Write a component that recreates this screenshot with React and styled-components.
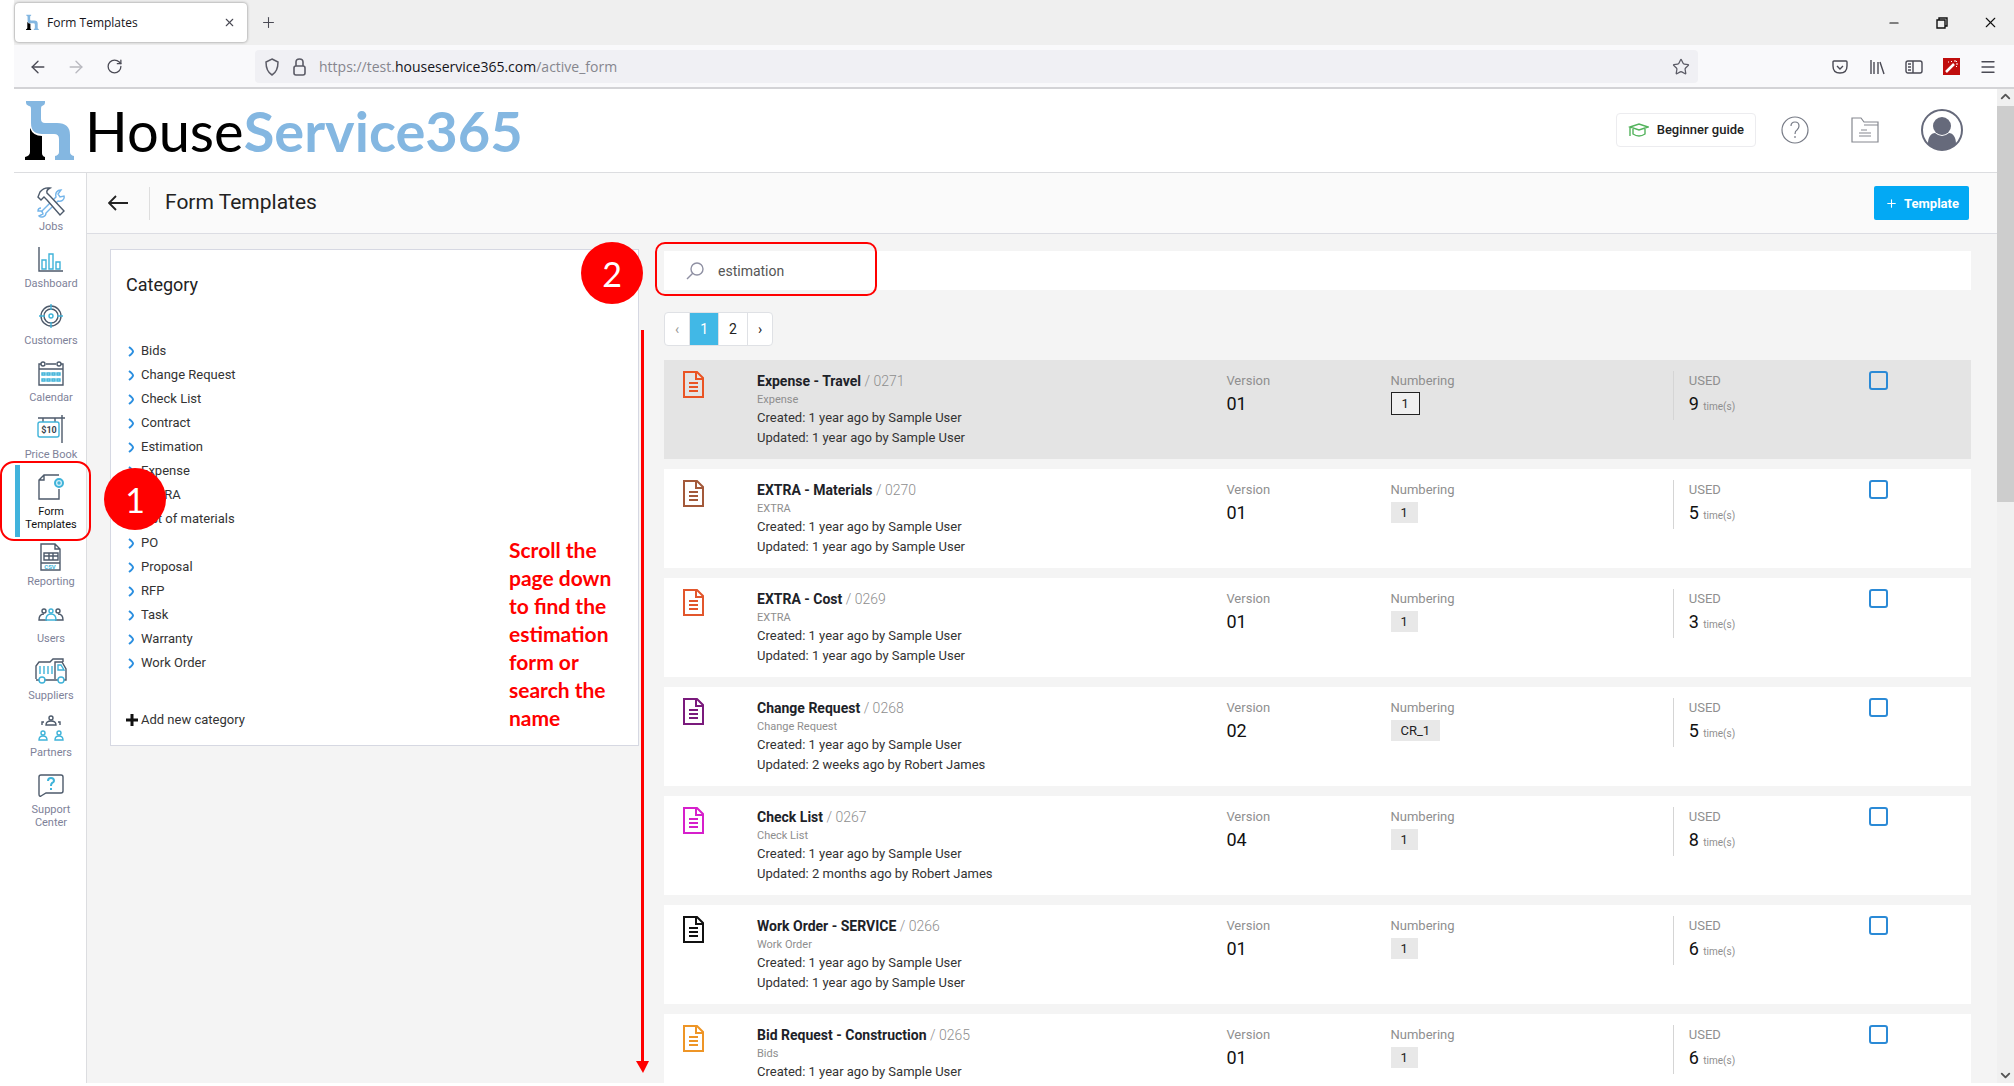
import React from "react";
import styled, { createGlobalStyle, css } from "styled-components";
import {
  ArrowLeft,
  ArrowRight,
  RotateCw,
  X,
  Plus,
  Minus,
  Star,
  Menu,
  ChevronUp,
  ChevronDown,
} from "lucide-react";

const DARK = "#4d5a6b";
const CYAN = "#3fb3d9";

const navItems = [
  { label: "Jobs", icon: "jobs" },
  { label: "Dashboard", icon: "dashboard" },
  { label: "Customers", icon: "customers" },
  { label: "Calendar", icon: "calendar" },
  { label: "Price Book", icon: "price" },
  { label: "Form Templates", icon: "form", active: true },
  { label: "Reporting", icon: "reporting" },
  { label: "Users", icon: "users" },
  { label: "Suppliers", icon: "suppliers" },
  { label: "Partners", icon: "partners" },
  { label: "Support Center", icon: "support" },
];

const categories = [
  "Bids",
  "Change Request",
  "Check List",
  "Contract",
  "Estimation",
  "Expense",
  "EXTRA",
  "List of materials",
  "PO",
  "Proposal",
  "RFP",
  "Task",
  "Warranty",
  "Work Order",
];

const templates = [
  { name: "Expense - Travel", id: "0271", category: "Expense", updated: "1 year ago by Sample User", version: "01", numbering: "1", used: 9, color: "#ea5424", active: true },
  { name: "EXTRA - Materials", id: "0270", category: "EXTRA", updated: "1 year ago by Sample User", version: "01", numbering: "1", used: 5, color: "#a3593a" },
  { name: "EXTRA - Cost", id: "0269", category: "EXTRA", updated: "1 year ago by Sample User", version: "01", numbering: "1", used: 3, color: "#e2562c" },
  { name: "Change Request", id: "0268", category: "Change Request", updated: "2 weeks ago by Robert James", version: "02", numbering: "CR_1", used: 5, color: "#7a1a7c" },
  { name: "Check List", id: "0267", category: "Check List", updated: "2 months ago by Robert James", version: "04", numbering: "1", used: 8, color: "#d61fcb" },
  { name: "Work Order - SERVICE", id: "0266", category: "Work Order", updated: "1 year ago by Sample User", version: "01", numbering: "1", used: 6, color: "#111111" },
  { name: "Bid Request - Construction", id: "0265", category: "Bids", updated: "1 year ago by Sample User", version: "01", numbering: "1", used: 6, color: "#ee9526" },
];

const HMark = ({ width, height }) => (
  <svg width={width} height={height} viewBox="0 0 50 60" aria-hidden="true">
    <path d="M1 0h19v2q0 2-3 3-1 0-1 3v10q0 4 4 4h12q13 0 13 12v17q0 3 4 4v4H30v-4q4-1 4-4V38q0-5-5-5H17Q6 33 6 22V8q0-3-2-3-3-1-3-3z" fill="#84b7e1" />
    <path d="M5 27q3 8 12 8v17q0 3 3 4v3H0v-3q5-1 5-5z" fill="#000" />
  </svg>
);

const NavIcon = ({ name }) => {
  const shapes = {
    jobs: (
      <>
        <g stroke="#74b5ea">
          <path d="M6 26l15-15c-1-4 1-7 5-7l-3 4 2 3 4-1c1 4-3 6-6 5L11 27c0 4-5 5-7 3l4-2-1-3-4 0c0-2 1-3 3-3" />
        </g>
        <path d="M3 11l2-5q4-5 10-4-4 2-3 5l3 3 14 15-4 4L12 14l-3-3-3 3z" fill="#fff" />
      </>
    ),
    dashboard: (
      <>
        <path d="M4 4v24h24" />
        <path d="M7 17h4v9H7zM14 11h4v15h-4zM21 19h4v7h-4z" stroke={CYAN} />
      </>
    ),
    customers: (
      <>
        <circle cx="16" cy="16" r="10" />
        <circle cx="16" cy="16" r="7" />
        <path d="M16 4v6M16 22v6M4 16h6M22 16h6" stroke={CYAN} />
        <circle cx="16" cy="16" r="2" stroke={CYAN} />
      </>
    ),
    calendar: (
      <>
        <path d="M6 7H4v21h24V7h-2M11 7h10M4 12h24" />
        <circle cx="8" cy="7" r="2" />
        <circle cx="24" cy="7" r="2" />
        <path d="M7 16h3v2H7zM12 16h3v2h-3zM17 16h3v2h-3zM22 16h3v2h-3zM7 22h3v2H7zM12 22h3v2h-3zM17 22h3v2h-3zM22 22h3v2h-3z" stroke={CYAN} />
      </>
    ),
    price: (
      <>
        <path d="M3 4h27M27 1v28M8 4v4M20 4v4" />
        <rect x="3" y="8" width="21" height="15" rx="2" stroke={CYAN} />
        <text x="14" y="19" textAnchor="middle" fontSize="9" fontWeight="700" fontFamily="Roboto, sans-serif" fill="#3a4450" stroke="none">$10</text>
      </>
    ),
    form: (
      <>
        <path d="M24 4H9L4 9v19h20V18M9 4v5H4" />
        <circle cx="24" cy="12" r="4" stroke={CYAN} strokeWidth="2" fill="#d5eff8" />
        <circle cx="24" cy="12" r="1" stroke={CYAN} />
      </>
    ),
    reporting: (
      <>
        <path d="M20 3H6v26h19V8zM20 3v5h5M9 12h14v7H9zM9 15h14M14 12v7M18 12v7M6 22h19" />
        <text x="15" y="28" textAnchor="middle" fontSize="6" fontWeight="700" fontFamily="Roboto, sans-serif" fill={CYAN} stroke="none">CSV</text>
      </>
    ),
    users: (
      <>
        <path d="M12 22H4c0-4 1-6 5-6M20 22h8c0-4-1-6-5-6" />
        <circle cx="9" cy="13" r="2" />
        <circle cx="23" cy="13" r="2" />
        <circle cx="16" cy="13" r="2" stroke={CYAN} />
        <path d="M11 22c0-4 2-6 5-6s5 2 5 6z" stroke={CYAN} />
      </>
    ),
    suppliers: (
      <>
        <path d="M1 24V11l3-4h11l3-3h10v3M4 25H1M9 25h14M20 24V7h7l4 7v11h-2" />
        <path d="M5 11v8M9 11v8M13 11v8M17 11v8M23 10h3l3 5h-6z" stroke={CYAN} />
        <circle cx="7" cy="25" r="3" stroke={CYAN} />
        <circle cx="26" cy="25" r="3" stroke={CYAN} />
      </>
    ),
    partners: (
      <>
        <circle cx="16" cy="6" r="2" />
        <path d="M11 13c0-3 2-4 5-4s5 1 5 4zM7 13v-3h2M25 13v-3h-2" />
        <g stroke={CYAN}>
          <circle cx="8" cy="21" r="2" />
          <circle cx="24" cy="21" r="2" />
          <path d="M4 28c0-3 1-4 4-4s4 1 4 4zM20 28c0-3 1-4 4-4s4 1 4 4z" />
        </g>
      </>
    ),
    support: (
      <>
        <path d="M6 6h20q2 0 2 2v14q0 2-2 2H11l-5 3q-2 1-2-2V8q0-2 2-2z" />
        <path d="M13 12q0-3 3-3t3 3q0 1-2 2-1 1-1 3M16 19v2" stroke={CYAN} strokeWidth="2" />
      </>
    ),
  };
  return (
    <svg width="32" height="32" viewBox="0 0 32 32" fill="none" stroke={DARK} strokeWidth="1.4" aria-hidden="true">
      {shapes[name]}
    </svg>
  );
};

const DocIcon = ({ color }) => (
  <svg width="21" height="27" viewBox="0 0 21 27" fill="none" stroke={color} strokeWidth="2" aria-hidden="true">
    <path d="M1 1h13l6 6v19H1z" />
    <path d="M13 1v7h7" />
    <path d="M6 12h9M6 16h9M6 20h9" />
  </svg>
);

const BrowserChrome = () => (
  <>
    <TabBar>
      <Tab>
        <HMark width={13} height={17} />
        <TabTitle>Form Templates</TabTitle>
        <ChromeButton aria-label="Close tab"><X size={13} strokeWidth={2} /></ChromeButton>
      </Tab>
      <ChromeButton aria-label="New tab"><Plus size={17} strokeWidth={1.5} /></ChromeButton>
      <WindowControls>
        <ChromeButton aria-label="Minimize"><Minus size={14} strokeWidth={2} /></ChromeButton>
        <ChromeButton aria-label="Restore">
          <svg width="12" height="12" viewBox="0 0 12 12" fill="none" stroke="currentColor" strokeWidth="1.4">
            <path d="M1 3h8v8H1zM3 3V1h8v8H9" />
          </svg>
        </ChromeButton>
        <ChromeButton aria-label="Close window"><X size={17} strokeWidth={1.5} /></ChromeButton>
      </WindowControls>
    </TabBar>
    <AddressRow>
      <NavButtons>
        <ChromeButton aria-label="Back"><ArrowLeft size={20} strokeWidth={1.6} /></ChromeButton>
        <ChromeButton aria-label="Forward" disabled><ArrowRight size={20} strokeWidth={1.6} /></ChromeButton>
        <ChromeButton aria-label="Reload"><RotateCw size={17} strokeWidth={1.8} /></ChromeButton>
      </NavButtons>
      <UrlBar>
        <svg width="16" height="18" viewBox="0 0 16 18" fill="none" stroke="#5b5b66" strokeWidth="1.5">
          <path d="M8 1l6 3c0 6-1 10-6 13C3 14 2 10 2 4z" />
        </svg>
        <svg width="13" height="18" viewBox="0 0 13 18" fill="none" stroke="#5b5b66" strokeWidth="1.6">
          <rect x="1" y="8" width="11" height="9" rx="2" />
          <path d="M3 8V4q0-3 3.5-3T10 4v4" />
        </svg>
        <Url>https://test.<b>houseservice365.com</b>/active_form</Url>
        <Star size={18} strokeWidth={1.7} />
      </UrlBar>
      <Extensions>
        <ChromeButton aria-label="Pocket">
          <svg width="16" height="16" viewBox="0 0 16 16" fill="none" stroke="currentColor" strokeWidth="1.4">
            <path d="M2 2h12q1 0 1 1v4q0 7-7 7T1 7V3q0-1 1-1zM5 7l3 3 3-3" />
          </svg>
        </ChromeButton>
        <ChromeButton aria-label="Library">
          <svg width="16" height="16" viewBox="0 0 16 16" fill="none" stroke="currentColor" strokeWidth="1.4">
            <path d="M2 1v14M5 3v12M9 3v12M11 3l4 12" />
          </svg>
        </ChromeButton>
        <ChromeButton aria-label="Sidebar">
          <svg width="18" height="16" viewBox="0 0 18 16" fill="none" stroke="currentColor" strokeWidth="1.4">
            <rect x="1" y="2" width="16" height="12" rx="2" />
            <path d="M8 2v12M3 5h3M3 8h3M3 11h3" />
          </svg>
        </ChromeButton>
        <ChromeButton aria-label="Extension">
          <svg width="17" height="17" viewBox="0 0 17 17">
            <path d="M0 0h17v17H0z" fill="#c00d0d" />
            <path d="M3 14l8-8" stroke="#fff" strokeWidth="2.5" />
            <path d="M12 2v2M15 6h-2M14 3l-1 1M8 3l1 1M14 9l-1-1M5 4h1" stroke="#fff" />
          </svg>
        </ChromeButton>
        <ChromeButton aria-label="Menu"><Menu size={18} strokeWidth={1.8} /></ChromeButton>
      </Extensions>
    </AddressRow>
  </>
);

const AppHeader = () => (
  <Header>
    <Logo href="#">
      <HMark width={50} height={60} />
      <LogoText>House<b>Service365</b></LogoText>
    </Logo>
    <HeaderActions>
      <GuideButton>
        <svg width="21" height="14" viewBox="0 0 21 14" fill="none" stroke="#53b35c" strokeWidth="1.4">
          <path d="M2 4l9-3 9 3-9 3zM5 6v5q6 4 12 0V6M2 4v9" />
        </svg>
        Beginner guide
      </GuideButton>
      <IconButton aria-label="Help">
        <svg width="28" height="28" viewBox="0 0 28 28" fill="none" stroke="#777b86" strokeWidth="1.2">
          <circle cx="14" cy="14" r="13" />
          <path d="M10 10q0-4 4-4t4 4q0 2-2 4-2 1-2 4M14 20v2" />
        </svg>
      </IconButton>
      <IconButton aria-label="Files">
        <svg width="28" height="26" viewBox="0 0 28 26" fill="none" stroke="#85888f" strokeWidth="1.2">
          <path d="M1 25V1h9l3 4h14v20zM13 8h14M10 13h6M8 16h12M8 19h12" />
        </svg>
      </IconButton>
      <IconButton aria-label="Account">
        <svg width="42" height="42" viewBox="0 0 42 42">
          <circle cx="21" cy="21" r="20" fill="#fff" stroke="#666a7b" strokeWidth="2" />
          <circle cx="21" cy="17" r="9" fill="#666a7b" />
          <path d="M7 35c0-7 3-11 7-11q7 6 14 0c4 0 7 4 7 11q-6 6-14 6T7 35z" fill="#666a7b" />
        </svg>
      </IconButton>
    </HeaderActions>
  </Header>
);

const Sidebar = () => (
  <Nav>
    {navItems.map((item) => (
      <NavItem key={item.label} href="#" $active={item.active}>
        <NavIcon name={item.icon} />
        <NavLabel>{item.label}</NavLabel>
        {item.active && (
          <>
            <ActiveBar />
            <NavOutline />
            <NavStep>1</NavStep>
          </>
        )}
      </NavItem>
    ))}
  </Nav>
);

const CategoryPanel = () => (
  <Panel>
    <PanelTitle>Category</PanelTitle>
    <CategoryList>
      {categories.map((name) => (
        <li key={name}>
          <CategoryLink href="#">
            <svg width="7" height="11" viewBox="0 0 7 11" fill="none" stroke="#2b8fe0" strokeWidth="2">
              <path d="M1 1q4 3 4 4.5T1 10" />
            </svg>
            {name}
          </CategoryLink>
        </li>
      ))}
    </CategoryList>
    <AddCategory>
      <svg width="12" height="12" viewBox="0 0 12 12" stroke="#111" strokeWidth="3">
        <path d="M6 0v12M0 6h12" />
      </svg>
      Add new category
    </AddCategory>
    <Note>Scroll the page down to find the estimation form or search the name</Note>
  </Panel>
);

const TemplateRow = ({ item }) => (
  <Row $active={item.active}>
    <DocIcon color={item.color} />
    <div>
      <RowTitle>{item.name} <span>/ {item.id}</span></RowTitle>
      <RowCategory>{item.category}</RowCategory>
      <RowMeta>Created: 1 year ago by Sample User</RowMeta>
      <RowMeta>Updated: {item.updated}</RowMeta>
    </div>
    <div>
      <FieldLabel>Version</FieldLabel>
      <FieldValue>{item.version}</FieldValue>
    </div>
    <div>
      <FieldLabel>Numbering</FieldLabel>
      <NumberChip $active={item.active}>{item.numbering}</NumberChip>
    </div>
    <UsedField>
      <FieldLabel>USED</FieldLabel>
      <FieldValue>{item.used} <small>time(s)</small></FieldValue>
    </UsedField>
    <Checkbox type="checkbox" aria-label={`Select ${item.name}`} />
  </Row>
);

const App = () => {
  return (
    <>
      <GlobalStyle />
      <Window>
        <BrowserChrome />
        <Viewport>
          <Site>
            <AppHeader />
            <Body>
              <Sidebar />
              <Main>
                <TitleBar>
                  <IconButton aria-label="Go back">
                    <svg width="20" height="16" viewBox="0 0 20 16" fill="none" stroke="#222" strokeWidth="1.8">
                      <path d="M8 1L1 8l7 7M1 8h19" />
                    </svg>
                  </IconButton>
                  <h1>Form Templates</h1>
                  <TemplateButton><Plus size={13} strokeWidth={2} />Template</TemplateButton>
                </TitleBar>
                <Content>
                  <CategoryPanel />
                  <Results>
                    <SearchBar>
                      <svg width="18" height="18" viewBox="0 0 18 18" fill="none" stroke="#8f90a3" strokeWidth="1.4">
                        <circle cx="11" cy="7" r="6" />
                        <path d="M7 11l-6 6" />
                      </svg>
                      <input type="text" aria-label="Search templates" defaultValue="estimation" />
                      <SearchOutline />
                      <SearchStep>2</SearchStep>
                    </SearchBar>
                    <Pagination aria-label="Pages">
                      <PageButton disabled>‹</PageButton>
                      <PageButton $active>1</PageButton>
                      <PageButton>2</PageButton>
                      <PageButton>›</PageButton>
                    </Pagination>
                    <RowList>
                      {templates.map((item) => (
                        <TemplateRow key={item.id} item={item} />
                      ))}
                    </RowList>
                    <ScrollArrow />
                  </Results>
                </Content>
              </Main>
            </Body>
          </Site>
          <Scrollbar>
            <ChevronUp size={15} strokeWidth={3} />
            <Thumb />
            <ChevronDown size={15} strokeWidth={3} />
          </Scrollbar>
        </Viewport>
      </Window>
    </>
  );
};

export default App;

const GlobalStyle = createGlobalStyle`
  * {
    box-sizing: border-box;
  }
  body {
    margin: 0;
    background: #fff;
    color: #333;
    font-family: Roboto, sans-serif;
    font-size: 13px;
  }
  button {
    padding: 0;
    border: 0;
    background: none;
    color: inherit;
    font: inherit;
  }
  h1, h2, h3, p, ul {
    margin: 0;
    padding: 0;
    list-style: none;
    font-weight: 400;
  }
  a {
    color: inherit;
    text-decoration: none;
  }
  svg {
    flex: none;
    display: block;
  }
`;

const Window = styled.div`
  display: flex;
  flex-direction: column;
  height: 100vh;
  padding: 0 0 3px 14px;
  overflow: hidden;
`;

const TabBar = styled.div`
  display: flex;
  align-items: center;
  gap: 12px;
  height: 45px;
  padding-left: 1px;
  background: #efefef;
`;

const Tab = styled.div`
  display: flex;
  align-items: center;
  gap: 8px;
  width: 232px;
  height: 39px;
  padding: 0 9px 0 11px;
  background: #fff;
  border-radius: 4px;
  box-shadow: 0 0 3px rgba(0, 0, 0, 0.45);
`;

const TabTitle = styled.span`
  flex: 1;
  color: #15141a;
  font: 12px "Open Sans", sans-serif;
`;

const ChromeButton = styled.button`
  display: flex;
  align-items: center;
  justify-content: center;
  width: 18px;
  height: 24px;
  color: ${(props) => (props.disabled ? "#b9b9bf" : "#4a4a54")};
`;

const WindowControls = styled.div`
  display: flex;
  gap: 30px;
  margin-left: auto;
  padding-right: 15px;

  button {
    color: #111;
  }
`;

const AddressRow = styled.div`
  display: flex;
  align-items: center;
  height: 44px;
  padding-top: 1px;
  background: #f9f9fb;
  border-bottom: 2px solid #d3d3d6;
`;

const NavButtons = styled.div`
  display: flex;
  gap: 20px;
  width: 241px;
  padding-left: 15px;
`;

const UrlBar = styled.div`
  display: flex;
  flex: 1;
  align-items: center;
  gap: 13px;
  height: 33px;
  padding: 0 8px 0 9px;
  background: #f0f0f4;
  border-radius: 4px;
  color: #5b5b66;
`;

const Url = styled.span`
  flex: 1;
  color: #86868e;
  font: 14px "Open Sans", sans-serif;

  b {
    color: #15141a;
    font-weight: 400;
  }
`;

const Extensions = styled.div`
  display: flex;
  justify-content: flex-end;
  gap: 19px;
  width: 316px;
  padding-right: 17px;
`;

const Viewport = styled.div`
  display: flex;
  flex: 1;
  min-height: 0;
`;

const Site = styled.div`
  display: flex;
  flex: 1;
  flex-direction: column;
  min-width: 0;
`;

const Header = styled.header`
  display: flex;
  flex: none;
  align-items: center;
  justify-content: space-between;
  height: 84px;
  padding: 0 34px 0 11px;
  background: #fff;
  border-bottom: 1px solid #dcdde0;
`;

const Logo = styled.a`
  display: flex;
  align-items: center;
  gap: 10px;
`;

const LogoText = styled.span`
  color: #000;
  font: 56px/60px Lato, sans-serif;

  b {
    color: #84b7e1;
    font-weight: 700;
  }
`;

const HeaderActions = styled.div`
  display: flex;
  align-items: center;
  padding-bottom: 2px;
`;

const IconButton = styled.button`
  display: flex;
  align-items: center;
  justify-content: center;
`;

const GuideButton = styled.button`
  display: flex;
  align-items: center;
  gap: 8px;
  height: 34px;
  padding: 0 11px;
  border: 1px solid #ececef;
  border-radius: 4px;
  color: #222;
  font-weight: 500;

  ~ ${IconButton} {
    margin-left: 42px;
  }

  + ${IconButton} {
    margin-left: 25px;
  }
`;

const Body = styled.div`
  display: flex;
  flex: 1;
  min-height: 0;
`;

const Nav = styled.nav`
  position: relative;
  z-index: 1;
  display: flex;
  flex: none;
  flex-direction: column;
  gap: 10px;
  width: 73px;
  padding: 13px 0 0 2px;
  background: #fff;
  border-right: 1px solid #dcdde0;
`;

const NavItem = styled.a`
  position: relative;
  display: flex;
  flex-direction: column;
  align-items: center;
  gap: 2px;
  color: ${(props) => (props.$active ? "#111" : "#7e8299")};
`;

const NavLabel = styled.span`
  max-width: 60px;
  font-size: 11px;
  line-height: 13px;
  text-align: center;
`;

const ActiveBar = styled.span`
  position: absolute;
  top: -6px;
  bottom: -6px;
  left: -1px;
  width: 5px;
  background: #41b3dc;
`;

const redOutline = css`
  position: absolute;
  border: 2px solid #f00;
  pointer-events: none;
`;

const NavOutline = styled.span`
  ${redOutline}
  inset: -10px -5px -10px -16px;
  border-radius: 14px;
`;

const Step = styled.span`
  position: absolute;
  display: flex;
  align-items: center;
  justify-content: center;
  width: 62px;
  height: 62px;
  border-radius: 50%;
  background: #f00;
  color: #fff;
  font: 34px Lato, sans-serif;
`;

const NavStep = styled(Step)`
  top: -3px;
  left: 88px;
`;

const SearchStep = styled(Step)`
  top: -9px;
  left: -83px;
`;

const Main = styled.main`
  display: flex;
  flex: 1;
  flex-direction: column;
  min-width: 0;
  overflow: hidden;
  background: #f4f4f4;
`;

const TitleBar = styled.div`
  display: flex;
  flex: none;
  align-items: center;
  gap: 21px;
  height: 61px;
  padding: 0 28px 0 21px;
  background: #fafafa;
  border-bottom: 1px solid #dcdde3;

  h1 {
    padding: 0 0 2px 15px;
    border-left: 1px solid #dedede;
    color: #222;
    font-size: 21px;
    line-height: 31px;
  }
`;

const TemplateButton = styled.button`
  display: flex;
  align-items: center;
  gap: 6px;
  height: 34px;
  margin-left: auto;
  padding: 0 10px 0 11px;
  border-radius: 2px;
  background: #03a9f4;
  color: #fff;
  font-weight: 700;
`;

const Content = styled.div`
  display: grid;
  flex: 1;
  grid-template-columns: minmax(0, 529fr) minmax(0, 1307fr);
  gap: 25px;
  align-items: start;
  min-height: 0;
  padding: 15px 26px 0 23px;
`;

const Panel = styled.section`
  position: relative;
  padding: 23px 15px 13px;
  background: #fff;
  border: 1px solid #d6d8e2;
`;

const PanelTitle = styled.h2`
  color: #222;
  font-size: 18px;
  line-height: 24px;
`;

const CategoryList = styled.ul`
  padding: 42px 0 33px;
`;

const CategoryLink = styled.a`
  display: flex;
  align-items: center;
  gap: 6px;
  padding-left: 2px;
  line-height: 24px;
`;

const AddCategory = styled.button`
  display: flex;
  align-items: center;
  gap: 3px;
  line-height: 24px;
`;

const Note = styled.p`
  position: absolute;
  top: 286px;
  right: 11px;
  width: 118px;
  color: #f00;
  font: 700 21px/28px Lato, sans-serif;
`;

const Results = styled.section`
  position: relative;
  padding-top: 2px;
`;

const SearchBar = styled.div`
  position: relative;
  display: flex;
  align-items: center;
  gap: 14px;
  height: 39px;
  padding: 0 22px;
  background: #fff;

  input {
    flex: 1;
    padding: 0;
    border: 0;
    outline: 0;
    color: #555;
    font: 14px Roboto, sans-serif;
  }
`;

const SearchOutline = styled.span`
  ${redOutline}
  top: -9px;
  left: -9px;
  width: 222px;
  height: 54px;
  border-radius: 10px;
`;

const Pagination = styled.nav`
  display: flex;
  width: max-content;
  margin: 22px 0 14px;
  overflow: hidden;
  border: 1px solid #dfe1e5;
  border-radius: 4px;
  background: #fff;
`;

const PageButton = styled.button`
  padding: 0 10px;
  color: ${(props) => (props.disabled ? "#999" : "#222")};
  font-size: 14px;
  line-height: 32px;

  & + & {
    border-left: 1px solid #dfe1e5;
  }

  ${(props) => props.$active && css`
    background: #41b8e6;
    color: #fff;
  `}
`;

const RowList = styled.ul`
  display: flex;
  flex-direction: column;
  gap: 10px;
`;

const Row = styled.li`
  display: grid;
  grid-template-columns: 74px 469fr 164fr 282fr 196fr 102fr;
  align-items: start;
  height: 99px;
  padding: 11px 0 0 19px;
  background: ${(props) => (props.$active ? "#e4e4e4" : "#fff")};
`;

const RowTitle = styled.h3`
  color: #1d2228;
  font-size: 14px;
  font-weight: 700;
  line-height: 20px;

  span {
    color: #8e8e8e;
    font-weight: 300;
  }
`;

const RowCategory = styled.p`
  color: #8e8e8e;
  font-size: 11px;
  line-height: 17px;
`;

const RowMeta = styled.p`
  line-height: 20px;
`;

const FieldLabel = styled.p`
  color: #8f8f8f;
  line-height: 20px;
`;

const FieldValue = styled.p`
  color: #111;
  font-size: 18px;
  line-height: 26px;

  small {
    color: #8e8e8e;
    font-size: 10px;
  }
`;

const NumberChip = styled.span`
  display: inline-block;
  margin-top: 2px;
  padding: 0 10px;
  background: #e8e8e8;
  color: #222;
  line-height: 21px;

  ${(props) => props.$active && css`
    margin-top: 1px;
    border: 1px solid #222;
    background: #f0f0f0;
  `}
`;

const UsedField = styled.div`
  padding-left: 15px;
  border-left: 1px solid #d5d5d5;
`;

const Checkbox = styled.input`
  width: 19px;
  height: 19px;
  margin: 0;
  appearance: none;
  border: 2px solid #2b8ad6;
  border-radius: 3px;
`;

const ScrollArrow = styled.span`
  position: absolute;
  top: 81px;
  left: -23px;
  width: 3px;
  height: 731px;
  background: #f00;

  &::after {
    content: "";
    position: absolute;
    top: 100%;
    left: -5px;
    border: solid transparent;
    border-width: 12px 6px 0 7px;
    border-top-color: #f00;
  }
`;

const Scrollbar = styled.div`
  display: flex;
  flex: none;
  flex-direction: column;
  align-items: center;
  justify-content: space-between;
  width: 17px;
  background: #f0f0f0;
  color: #555;
`;

const Thumb = styled.div`
  width: 100%;
  height: 396px;
  margin: 2px 0 auto;
  background: #cdcdcd;
`;
